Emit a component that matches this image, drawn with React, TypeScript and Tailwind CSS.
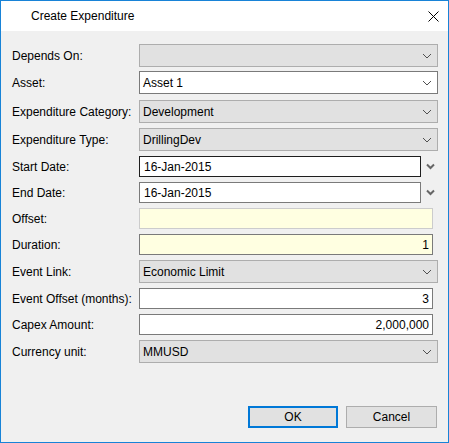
type FieldProps = {
  label: string;
  kind: "combo" | "comboWhite" | "date" | "dateFocus" | "yellow" | "yellowDim" | "text";
  value?: string;
  rowH: string;
};

const Chevron = () => (
  <svg width="10" height="6" viewBox="0 0 10 6" className="absolute right-[5px] top-1/2 -translate-y-1/2">
    <path d="M1 1 L5 5 L9 1" fill="none" stroke="#505050" strokeWidth="1" />
  </svg>
);

const DateChevron = () => (
  <svg width="9" height="7" viewBox="0 0 9 7" className="ml-[5px]">
    <path d="M1 1.5 L4.5 5 L8 1.5" fill="none" stroke="#666" strokeWidth="2" />
  </svg>
);

const Field = ({ label, kind, value, rowH }: FieldProps) => {
  let box;
  if (kind === "combo" || kind === "comboWhite") {
    const cls =
      kind === "combo"
        ? "bg-[#e1e1e1] border-[#adadad]"
        : "bg-white border-[#7a7a7a]";
    box = (
      <div className={`relative w-[299px] h-[23px] border ${cls} flex items-center pl-[3px] text-black`}>
        {value}
        <Chevron />
      </div>
    );
  } else if (kind === "date" || kind === "dateFocus") {
    const cls = kind === "dateFocus" ? "border-[#1e1e1e]" : "border-[#7a7a7a]";
    box = (
      <div className="flex items-center">
        <div className={`w-[282px] h-[21px] border ${cls} bg-white flex items-center pl-[4px]`}>{value}</div>
        <DateChevron />
      </div>
    );
  } else if (kind === "yellow" || kind === "yellowDim") {
    const cls = kind === "yellowDim" ? "border-[#cccccc]" : "border-[#7a7a7a]";
    box = (
      <div className={`w-[294px] h-[21px] border ${cls} bg-[#ffffe1] flex items-center justify-end pr-[3px]`}>
        {value}
      </div>
    );
  } else {
    box = (
      <div className="w-[294px] h-[21px] border border-[#7a7a7a] bg-white flex items-center justify-end pr-[3px]">
        {value}
      </div>
    );
  }
  const boxH = kind.startsWith("combo") ? "h-[23px]" : "h-[21px]";
  return (
    <div className={`flex items-start ${rowH}`}>
      <div className={`w-[127px] ${boxH} flex items-center text-black`}>{label}</div>
      {box}
    </div>
  );
};

export default function App() {
  return (
    <div
      className="w-[449px] h-[443px] border border-[#1883d7] bg-[#f0f0f0] flex flex-col text-[12px]"
      style={{ fontFamily: '"Liberation Sans", Arial, sans-serif' }}
    >
      <div className="h-[30px] bg-white flex items-center justify-between pl-[30px] pr-[9px] shrink-0">
        <span className="text-black text-[12px]">Create Expenditure</span>
        <svg width="11" height="11" viewBox="0 0 11 11">
          <path d="M0.5 0.5 L10.5 10.5 M10.5 0.5 L0.5 10.5" stroke="#000" strokeWidth="1" />
        </svg>
      </div>

      <div className="flex flex-col pl-[11px] pt-[13px]">
        <Field label="Depends On:" kind="combo" rowH="h-[27px]" />
        <Field label="Asset:" kind="comboWhite" value="Asset 1" rowH="h-[29px]" />
        <Field label="Expenditure Category:" kind="combo" value="Development" rowH="h-[28px]" />
        <Field label="Expenditure Type:" kind="combo" value="DrillingDev" rowH="h-[28px]" />
        <Field label="Start Date:" kind="dateFocus" value="16-Jan-2015" rowH="h-[26px]" />
        <Field label="End Date:" kind="date" value="16-Jan-2015" rowH="h-[26px]" />
        <Field label="Offset:" kind="yellowDim" rowH="h-[26px]" />
        <Field label="Duration:" kind="yellow" value="1" rowH="h-[26px]" />
        <Field label="Event Link:" kind="combo" value="Economic Limit" rowH="h-[28px]" />
        <Field label="Event Offset (months):" kind="text" value="3" rowH="h-[26px]" />
        <Field label="Capex Amount:" kind="text" value="2,000,000" rowH="h-[26px]" />
        <Field label="Currency unit:" kind="combo" value="MMUSD" rowH="h-[26px]" />
      </div>

      <div className="flex justify-end gap-[8px] pr-[11px] mt-[40px]">
        <button className="w-[90px] h-[22px] border-2 border-[#0078d7] bg-[#e1e1e1] text-black text-[12px]">OK</button>
        <button className="w-[91px] h-[22px] border border-[#adadad] bg-[#e1e1e1] text-black text-[12px]">Cancel</button>
      </div>
    </div>
  );
}
